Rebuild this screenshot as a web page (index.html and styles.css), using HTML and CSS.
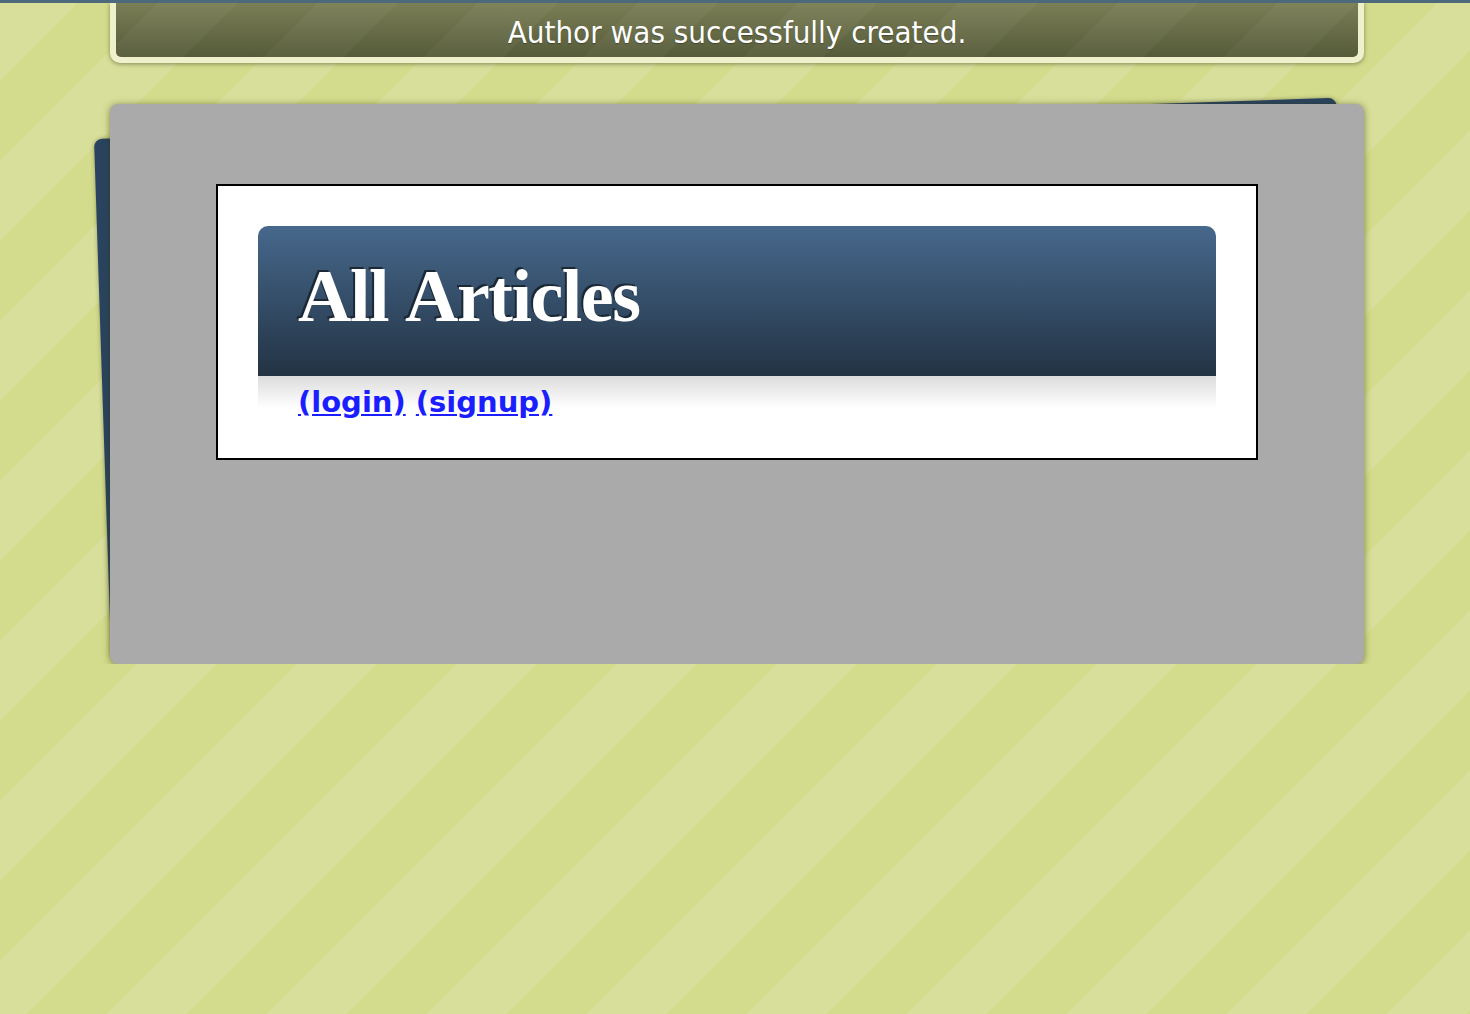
FILE: index.html
```html
<!DOCTYPE html>
<html lang="en">
<head>
<meta charset="utf-8">
<title>All Articles</title>
<link rel="stylesheet" href="styles.css">
</head>
<body>
<div class="page">
  <div class="flash"><p class="flash-msg">Author was successfully created.</p></div>
  <div class="stack">
    <main class="card">
      <section class="panel">
        <header class="panel-head"><h1>All Articles</h1></header>
        <div class="panel-links"><a href="#">(login)</a> <a href="#">(signup)</a></div>
      </section>
    </main>
  </div>
</div>
</body>
</html>
```

FILE: styles.css
```css
html {
  height: 100%;
  background: #d3dc8c repeating-linear-gradient(135deg, #d8df9a 0 56.57px, #d3dc8c 56.57px 113.14px) fixed;
}

body {
  margin: 0;
  border-top: 3px solid #4d6a7c;
}

.page {
  margin: 0 106px 0 110px;
}

.flash {
  background: #eef1cb;
  padding: 0 6px 6px;
  border-radius: 0 0 10px 10px;
  box-shadow: 0 1px 4px rgba(50, 50, 20, 0.5);
}

.flash-msg {
  margin: 0;
  height: 54px;
  box-sizing: border-box;
  padding-top: 5px;
  line-height: 49px;
  text-align: center;
  color: #fff;
  font-family: "DejaVu Sans Condensed", "DejaVu Sans", sans-serif;
  font-stretch: condensed;
  font-size: 31px;
  text-shadow: 0 1px 1px rgba(0, 0, 0, 0.3);
  background:
    repeating-linear-gradient(135deg, rgba(255, 255, 255, 0.035) 0 56.57px, rgba(255, 255, 255, 0) 56.57px 113.14px) fixed,
    linear-gradient(#7b7f56, #555a39);
  border-radius: 0 0 5px 5px;
}

.stack {
  position: relative;
  margin-top: 41px;
}

.stack::before {
  content: "";
  position: absolute;
  left: -16.5px;
  top: 35px;
  width: 1243px;
  height: 520px;
  background: #2a4460;
  border-radius: 8px;
  transform: rotate(-1.9deg);
  transform-origin: 0 0;
  box-shadow: 0 0 4px rgba(0, 0, 0, 0.3);
}

.card {
  position: relative;
  display: block;
  height: 560px;
  box-sizing: border-box;
  padding: 80px 106px 0;
  background: #aaaaaa;
  border-radius: 8px;
  box-shadow: 0 1px 7px rgba(50, 50, 0, 0.55);
}

.panel {
  background: #fff;
  border: 2px solid #000;
  padding: 40px;
}

.panel-head {
  height: 150px;
  border-radius: 10px 10px 0 0;
  background: linear-gradient(#46688c, #233344);
}

.panel-head h1 {
  margin: 0;
  padding: 0 40px 9px;
  line-height: 141px;
  font-family: "Liberation Serif", "Times New Roman", serif;
  font-weight: bold;
  font-size: 74px;
  letter-spacing: -1.5px;
  word-spacing: 4px;
  color: #fff;
  text-shadow: -2px -2px 0 #1b2836;
}

.panel-links {
  padding: 10px 40px 0;
  line-height: 32px;
  background: linear-gradient(#dcdcdc, #fff 32px);
  font-family: "DejaVu Sans", Verdana, sans-serif;
  font-weight: bold;
  font-size: 29px;
}

.panel-links a {
  color: #1b1eff;
}
```
